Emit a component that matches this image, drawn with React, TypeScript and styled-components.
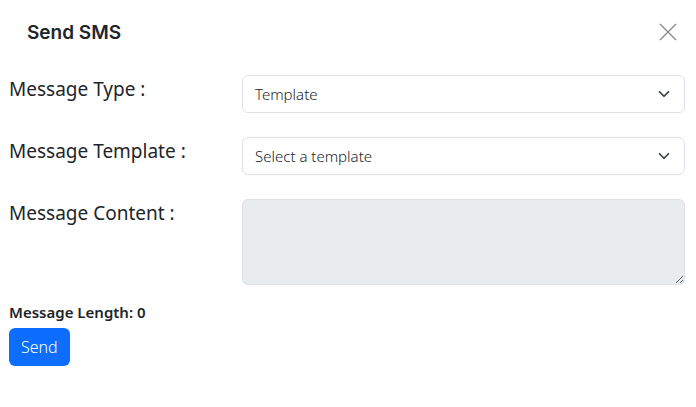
import React, { useState } from 'react'
import styled, { createGlobalStyle } from 'styled-components'

const GlobalStyle = createGlobalStyle`
  body {
    margin: 0;
    background: #fff;
    font-family: 'Noto Sans', 'Open Sans', sans-serif;
    color: #212529;
  }
`

const Modal = styled.div`
  padding: 0 11px 0 9px;
`

const Header = styled.div`
  display: flex;
  align-items: center;
  justify-content: space-between;
  height: 64px;
  padding-left: 18px;
`

const Title = styled.h5`
  margin: 0;
  font-family: 'Inter', sans-serif;
  font-size: 19px;
  font-weight: 600;
  color: #212529;
`

const CloseButton = styled.button`
  border: 0;
  background: transparent;
  padding: 0;
  margin-right: 8px;
  width: 18px;
  height: 18px;
  display: flex;
  align-items: center;
  justify-content: center;
  cursor: pointer;
`

const Form = styled.form`
  display: flex;
  flex-direction: column;
  margin-top: 11px;
`

const Fields = styled.div`
  display: grid;
  grid-template-columns: 233px 1fr;
  row-gap: 24px;
`

const Label = styled.label`
  font-size: 19px;
  font-weight: 400;
  padding-top: 1px;
  color: #212529;
`

const SelectBox = styled.div`
  position: relative;
  height: 38px;
  border: 1px solid #dee2e6;
  border-radius: 6px;
  box-sizing: border-box;
  display: flex;
  align-items: center;
  padding: 0 12px;
  font-size: 15px;
  font-weight: 300;
  color: #212529;
  background: #fff;
`

const Chevron = styled.svg`
  position: absolute;
  right: 14px;
  top: 50%;
  transform: translateY(-50%);
`

const TextArea = styled.textarea`
  height: 86px;
  box-sizing: border-box;
  border: 1px solid #dee2e6;
  border-radius: 6px;
  background: #e9ecef;
  resize: vertical;
  font: inherit;
`

const Length = styled.div`
  margin-top: 17px;
  font-size: 15px;
  font-weight: 600;
  line-height: 20px;
`

const SendButton = styled.button`
  align-self: flex-start;
  margin-top: 6px;
  height: 38px;
  padding: 0 12px;
  border: 0;
  border-radius: 6px;
  background: #0d6efd;
  color: #fff;
  font-family: 'Noto Sans', sans-serif;
  font-size: 16px;
  font-weight: 300;
  cursor: pointer;
`

const Select = ({ value }: { value: string }) => (
  <SelectBox>
    {value}
    <Chevron width="12" height="12" viewBox="0 0 16 16">
      <path d="M2 5l6 6 6-6" fill="none" stroke="#343a40" strokeWidth="2.2" strokeLinecap="round" strokeLinejoin="round" />
    </Chevron>
  </SelectBox>
)

export default function App() {
  const [content] = useState('')
  return (
    <Modal>
      <GlobalStyle />
      <Header>
        <Title>Send SMS</Title>
        <CloseButton aria-label="Close">
          <svg width="18" height="18" viewBox="0 0 18 18">
            <path d="M1 1l16 16M17 1L1 17" stroke="#8a8a8a" strokeWidth="1.3" />
          </svg>
        </CloseButton>
      </Header>
      <Form onSubmit={e => e.preventDefault()}>
        <Fields>
          <Label>Message Type :</Label>
          <Select value="Template" />
          <Label>Message Template :</Label>
          <Select value="Select a template" />
          <Label>Message Content :</Label>
          <TextArea disabled value={content} readOnly />
        </Fields>
        <Length>Message Length: {content.length}</Length>
        <SendButton type="submit">Send</SendButton>
      </Form>
    </Modal>
  )
}
